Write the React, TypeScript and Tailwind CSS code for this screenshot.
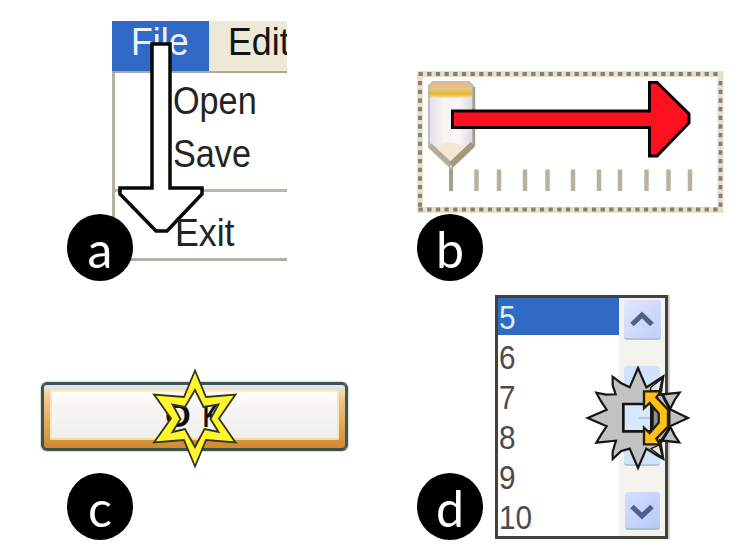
import type { ReactNode } from "react";

const ui = "font-['Liberation_Sans',sans-serif]";

function Badge({ letter, place }: { letter: string; place: string }) {
  return (
    <div className={`absolute flex h-[67px] w-[66px] justify-center rounded-full bg-black font-['Lato',sans-serif] text-[50px] leading-[71px] text-white ${place}`}>
      {letter}
    </div>
  );
}

/* Drawing layer over one panel, in the coordinates of the whole figure. */
function Overlay({ viewBox, children }: { viewBox: string; children: ReactNode }) {
  return (
    <svg className="pointer-events-none absolute inset-0 h-full w-full" viewBox={viewBox} fill="none">
      {children}
    </svg>
  );
}

function MenuText({ children, className = "" }: { children: string; className?: string }) {
  return (
    <span className={`inline-block origin-left whitespace-nowrap ${className}`}>{children}</span>
  );
}

function MenuPanel() {
  return (
    <section className="relative pt-[21px] pl-[112px]">
      <div className={`flex h-[240px] w-[175px] flex-col overflow-hidden text-[38px] text-[#242424] ${ui}`}>
        <div className="flex h-[50px] shrink-0 leading-[42px]">
          <div className="w-[97px] bg-[#316ac5] pl-[19px] text-[#edf4ff]">
            <MenuText className="scale-x-[0.94]">File</MenuText>
          </div>
          <div className="flex-1 overflow-hidden bg-[#ece9d8] pl-[19px] text-[#151515]">
            <MenuText className="scale-x-[0.94]">Edit</MenuText>
          </div>
        </div>
        <div className="flex h-[190px] shrink-0 flex-col border-t-2 border-b-[3px] border-l-[3px] border-t-[#aca899] border-b-[#b5b0a2] border-l-[#b5b0a2] bg-white">
          <div className="h-[54px] shrink-0 pl-[58px] leading-[56px]">
            <MenuText className="scale-x-[0.9]">Open</MenuText>
          </div>
          <div className="h-[62px] shrink-0 pl-[58px] leading-[54px]">
            <MenuText className="scale-x-[0.9]">Save</MenuText>
          </div>
          <div className="h-[3px] shrink-0 bg-[#bdb8aa]" />
          <div className="h-[66px] shrink-0 pl-[60px] leading-[82px]">
            <MenuText className="scale-x-[0.94]">Exit</MenuText>
          </div>
        </div>
      </div>
      <Overlay viewBox="0 0 370 290">
        <path
          d="M152 44H170V188H202V194L167 231H156L120 194V188H152Z"
          fill="white"
          stroke="#080808"
          strokeWidth="3.5"
        />
      </Overlay>
      {/* The first letter of Exit stays visible above the arrow head. */}
      <Overlay viewBox="0 0 370 290">
        <path d="M179.5 219V244" stroke="#242424" strokeWidth="3" />
      </Overlay>
      <Badge letter="a" place="left-[67px] top-[214px]" />
    </section>
  );
}

const ticks = [476.5, 499, 525, 547.5, 573, 599, 620, 646.5, 668.5, 690];

function SliderPanel() {
  return (
    <section className="relative">
      <Overlay viewBox="370 0 370 290">
        <defs>
          <linearGradient id="cap" x1="0" y1="0" x2="0" y2="1">
            <stop stopColor="#e0b6a0" />
            <stop offset="0.45" stopColor="#e6c47b" />
            <stop offset="0.75" stopColor="#e5b72f" />
            <stop offset="1" stopColor="#f4e4b0" />
          </linearGradient>
          <linearGradient id="body" x1="0" y1="0" x2="1" y2="0">
            <stop stopColor="#e5e0ed" />
            <stop offset="0.35" stopColor="#f6f5f1" />
            <stop offset="0.7" stopColor="#f7f5f9" />
            <stop offset="1" stopColor="#d9d9e2" />
          </linearGradient>
        </defs>
        <rect x="420" y="74" width="300.5" height="136" stroke="#e6e1ce" strokeWidth="6" />
        <path d="M418.5 74H722M418.5 209.5H722" stroke="#89806b" strokeWidth="3.8" strokeDasharray="4.3 4.37" />
        <path d="M420 81V208M720.5 81V208" stroke="#89806b" strokeWidth="3.8" strokeDasharray="4.3 4.37" />
        {ticks.map((x) => (
          <path key={x} d={`M${x} 169.5V191`} stroke="#b8b39f" strokeWidth="4.5" />
        ))}
        <path d="M451 164V191" stroke="#a5a18d" strokeWidth="4" />
        <path d="M433 82H469L473 86V147L451 168L429 147V86Z" fill="url(#body)" stroke="#bdbbb7" strokeWidth="2" />
        <path d="M433 82H469L472 86V98H430V86Z" fill="url(#cap)" />
        <path d="M474 87V146" stroke="#a1a08e" strokeWidth="2.5" />
        <path d="M430 147L451 142L471 147L451 164Z" fill="#f4e8d5" />
        <path d="M429.5 145L451 165" stroke="#b5ac98" strokeWidth="5" />
        <path d="M451 165L473 144" stroke="#a3987b" strokeWidth="6" />
        <path
          d="M452.5 111H649.5V82.5H657L689 114V123L657 156H649.5V127.5H452.5Z"
          fill="#ff101e"
          stroke="#080000"
          strokeWidth="3"
        />
      </Overlay>
      <Badge letter="b" place="left-[47px] top-[214px]" />
    </section>
  );
}

function ButtonPanel() {
  return (
    <section className="relative pt-[92px] pl-[41px]">
      <div className="h-[69px] w-[307px] rounded-[6px] border-[3px] border-t-[#3b5563] border-r-[#405855] border-b-[#3a5148] border-l-[#405149] bg-linear-to-b from-[#dfeaf0] via-[#f3c987] via-20% to-[#d08a2c] shadow-[0_0_1px_1px_#d5e2df]">
        <div className="h-full px-[6px] pt-[5px] pb-[8px]">
          <div className={`flex h-full items-center rounded-[2px] border-2 border-t-[#fdebc8] border-r-[#f9e3bd] border-b-[#f3d9a4] border-l-[#f9e3bd] bg-linear-to-b from-[#fffdf6] via-[#f6f5f4] via-40% to-[#efefeb] pl-[113px] text-[33px] leading-none font-bold text-[#111] ${ui}`}>
            <span className="inline-block w-[38px]">O</span>
            <span className="inline-block w-[16px] origin-left scale-x-[0.65]">K</span>
          </div>
        </div>
      </div>
      <Overlay viewBox="0 290 370 266">
        <path
          fillRule="evenodd"
          d="M195 370.5L206 397L235.5 394.5L219 418.5L235.5 442.5L206 440L195 466.5L184 440L154 442.5L171 418.5L154 394.5L184 397ZM195 390L203.5 407L218.5 404.5L210.5 419L218.5 432L204.5 429L195 447L185 429L172.5 432L180.5 419L172.5 404.5L185 407Z"
          fill="#fff62b"
          stroke="#36351c"
          strokeWidth="1.8"
        />
      </Overlay>
      <Badge letter="c" place="left-[67px] top-[183px]" />
    </section>
  );
}

function ListPanel() {
  return (
    <section className="relative pt-[5px] pl-[125px]">
      <div className={`flex h-[244px] w-[173px] border-[3px] border-[#42423e] bg-[#fefefd] shadow-[2px_0_0_#d4d1c8] ${ui}`}>
        <div className="w-[121px] text-[33px] leading-[40px] text-[#4b4b4b]">
          <div className="h-[37px] bg-[#316ac5] pl-px text-[#d9efff]">
            <MenuText className="scale-x-[0.9]">5</MenuText>
          </div>
          <div className="flex flex-col pt-[3px] pl-px">
            {["6", "7", "8", "9", "10"].map((value) => (
              <div key={value} className="h-[40px]">
                <MenuText className="scale-x-[0.9]">{value}</MenuText>
              </div>
            ))}
          </div>
        </div>
        <div className="flex flex-1 flex-col items-center bg-[#f4f3ee] pt-[2px]">
          <div className="flex h-[40px] w-[37px] items-center justify-center rounded-[3px] border-b-2 border-[#b3c2df] bg-linear-to-br from-[#dfe6fc] to-[#c1d0f7]">
            <svg viewBox="0 0 24 16" className="h-4 w-6" fill="none">
              <path d="M2 13.5L12 4L22 13.5" stroke="#4d6185" strokeWidth="5" />
            </svg>
          </div>
          <div className="mt-[26px] h-[100px] w-[36px] rounded-[3px] border-b-2 border-[#adc5df] bg-[#d0e3fb]" />
          <div className="mt-[26px] flex h-[38px] w-[35px] items-center justify-center rounded-[3px] border-b-2 border-[#a8bfdc] bg-linear-to-br from-[#d2defc] to-[#b9cbf5]">
            <svg viewBox="0 0 24 16" className="mt-1 h-4 w-6" fill="none">
              <path d="M2 2.5L12 12L22 2.5" stroke="#4d5f91" strokeWidth="5" />
            </svg>
          </div>
        </div>
      </div>
      <Overlay viewBox="370 290 370 266">
        <g transform="translate(580 360) scale(0.33333)" stroke="#151515" strokeWidth="6.5">
          <path
            d="M174 24L199 82L224 66L250 49L243 92L240 104L299 98L284 120L270 148L324 174L270 199L284 226L298 247L240 241L243 255L250 297L224 282L199 266L174 324L149 266L124 273L98 297L98 275L108 242L49 248L62 226L80 199L23 174L80 149L62 122L49 98L78 104L107 103L98 76L98 50L124 70L149 82Z"
            fill="#c2c2c2"
          />
          <path d="M213 82L247 55L238 92L211 92Z" fill="#e2e8ec" strokeWidth="4" />
          <path d="M213 266L247 292L238 255Z" fill="#e2e8ec" strokeWidth="4" />
          <path d="M245 100L267 142V207L242 247" fill="none" strokeWidth="9" />
          <path d="M130 132H214V214H130Z" fill="#d8e9fb" strokeWidth="8" />
          <path d="M218 145L240 157V191L218 207Z" fill="#8b9399" />
          <path d="M176 174H210" stroke="#b7cce4" />
          <path
            d="M192 94H242L229 112L264 149V200L229 236L240 253H192V203L209 219L236 188V160L209 129L192 145Z"
            fill="#ffc119"
            stroke="#292106"
            strokeWidth="7"
          />
        </g>
      </Overlay>
      <Badge letter="d" place="left-[47px] top-[183px]" />
    </section>
  );
}

export default function App() {
  return (
    <main className="grid h-[556px] w-[740px] grid-cols-[370px_370px] grid-rows-[290px_266px] overflow-hidden bg-white">
      <MenuPanel />
      <SliderPanel />
      <ButtonPanel />
      <ListPanel />
    </main>
  );
}
